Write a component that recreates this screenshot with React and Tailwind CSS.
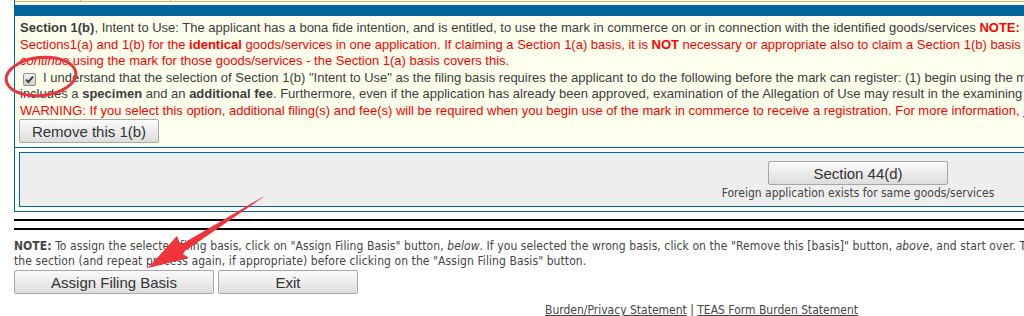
import React from "react";

const arial = { fontFamily: '"Liberation Sans", Arial, sans-serif' };
const tahoma = { fontFamily: '"DejaVu Sans Condensed", "DejaVu Sans", sans-serif' };

const GrayButton = ({ children, className = "" }) => (
    <button
        type="button"
        style={arial}
        className={
            "h-[24px] border border-[#a6a6a6] rounded-[2px] bg-gradient-to-b from-[#fbfbfb] to-[#dddddd] text-[15px] leading-none text-[#333] " +
            className
        }
    >
        {children}
    </button>
);

const CheckBox = () => (
    <span className="inline-flex w-[13px] h-[13px] items-center justify-center border border-[#8e8e8e] rounded-[2px] bg-gradient-to-b from-[#f2f2f2] to-[#cfcfcf] align-[-2px] ml-[3px] mr-[7px]">
        <svg width="9" height="9" viewBox="0 0 9 9">
            <path d="M1 4.6 L3.4 7 L8 1.6" fill="none" stroke="#3a3a3a" strokeWidth="1.9" />
        </svg>
    </span>
);

export default function App() {
    return (
        <div className="relative w-[1024px] h-[316px] overflow-hidden bg-white">
            <div className="ml-[14px] w-[1400px]">
                {/* top table edge */}
                <div className="flex border-l border-[#006699] h-[2px]">
                    <div className="w-[66px] bg-[#ffffee] border-b border-r border-[#d9b54a]" />
                    <div className="w-[90px] bg-[#ffffee] border-b border-r border-[#d9b54a]" />
                    <div className="flex-1 bg-[#ffffee] border-b border-[#d9b54a]" />
                </div>
                <div className="border-l border-[#006699] h-[3px]" />
                <div className="border-l border-[#006699] h-[11px] bg-[#006699]" />

                {/* Section 1(b) panel */}
                <div
                    style={arial}
                    className="border-l border-b border-[#006699] bg-[#ffffee] pl-[5px] pt-[4px] pb-[4px] text-[13px] leading-[16.5px] text-[#3c3c3c] whitespace-nowrap"
                >
                    <div>
                        <b>Section 1(b)</b>, Intent to Use: The applicant has a bona fide intention, and is entitled, to use the mark in commerce on or in connection with the identified goods/services{" "}
                        <b className="text-[#ff0000]">NOTE:</b>{" "}
                        <span className="text-[#ff0000]">Do not claim both</span>
                    </div>
                    <div className="text-[#ff0000]">
                        Sections1(a) and 1(b) for the <b>identical</b> goods/services in one application. If claiming a Section 1(a) basis, it is <b>NOT</b> necessary or appropriate also to claim a Section 1(b) basis for those goods/services.
                    </div>
                    <div className="text-[#ff0000]">
                        <i>continue</i> using the mark for those goods/services - the Section 1(a) basis covers this.
                    </div>
                    <div>
                        <CheckBox />I understand that the selection of Section 1(b) "Intent to Use" as the filing basis requires the applicant to do the following before the mark can register: (1) begin using the mark in commerce
                    </div>
                    <div>
                        includes a <b>specimen</b> and an <b>additional fee</b>. Furthermore, even if the application has already been approved, examination of the Allegation of Use may result in the examining attorney
                    </div>
                    <div className="text-[#ff0000]">
                        WARNING: If you select this option, additional filing(s) and fee(s) will be required when you begin use of the mark in commerce to receive a registration. For more information,{" "}
                        <span className="text-[#0000ee] underline">see the ITU page</span>
                    </div>
                    <GrayButton className="w-[140px] -ml-[1px]">Remove this 1(b)</GrayButton>
                </div>

                {/* other bases */}
                <div className="border-l border-b border-[#006699] px-[4px] pt-[4px] pb-[4px]">
                    <div className="border border-[#006699] bg-[#eeeeee] h-[55px] flex">
                        <div className="ml-[693px] w-[290px] flex flex-col items-center pt-[8px]">
                            <GrayButton className="w-[180px] h-[23px]">Section 44(d)</GrayButton>
                            <div style={tahoma} className="mt-[1px] text-[12px] leading-[14px] text-[#444]">
                                Foreign application exists for same goods/services
                            </div>
                        </div>
                    </div>
                </div>

                <div className="mt-[7px] h-[2px] bg-black" />
                <div className="mt-[7px] h-[2px] bg-black" />

                {/* footer note */}
                <div style={tahoma} className="mt-[9px] text-[12px] leading-[14.5px] tracking-[0.08px] text-[#444] whitespace-nowrap">
                    <div>
                        <b>NOTE:</b> To assign the selected filing basis, click on "Assign Filing Basis" button, <i>below</i>. If you selected the wrong basis, click on the "Remove this [basis]" button, <i>above</i>, and start over. To remove a basis,
                    </div>
                    <div>the section (and repeat process again, if appropriate) before clicking on the "Assign Filing Basis" button.</div>
                </div>
                <div className="mt-[2px] flex gap-[4px]">
                    <GrayButton className="w-[200px]">Assign Filing Basis</GrayButton>
                    <GrayButton className="w-[140px]">Exit</GrayButton>
                </div>
                <div style={tahoma} className="mt-[9px] pl-[531px] text-[12px] leading-[14px] text-[#444] whitespace-nowrap">
                    <span className="underline underline-offset-[1px]">Burden/Privacy Statement</span> | <span className="underline underline-offset-[1px]">TEAS Form Burden Statement</span>
                </div>
            </div>

            {/* annotations */}
            <svg className="absolute left-0 top-0 pointer-events-none" width="1024" height="316">
                <ellipse cx="41" cy="76.5" rx="35" ry="19" fill="none" stroke="#e8343c" strokeWidth="3" transform="rotate(-6 41 76.5)" />
                <polygon
                    points="264,196 262.6,197.6 185,251 183,254 189,258 148,268 177,236 179,241 181,244.5 265,195.5"
                    fill="#f0343c"
                />
            </svg>
        </div>
    );
}
